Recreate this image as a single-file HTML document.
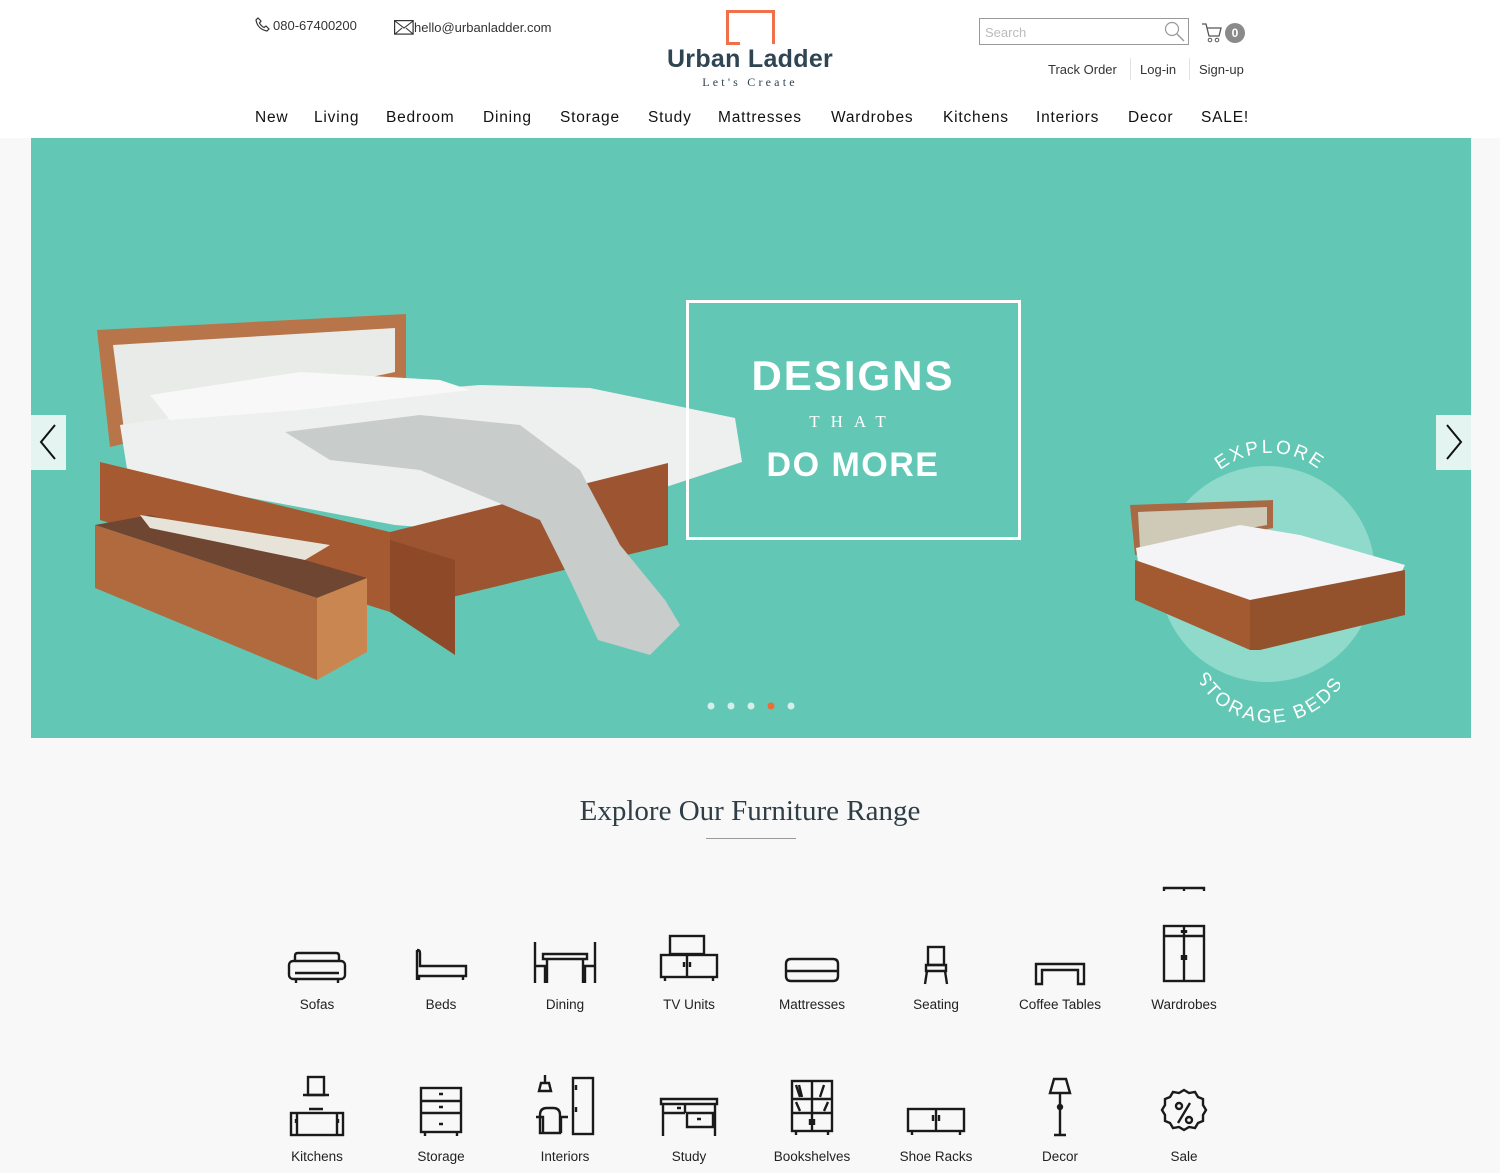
<!DOCTYPE html>
<html><head><meta charset="utf-8"><style>
*{margin:0;padding:0;box-sizing:border-box}
body{width:1500px;height:1173px;background:#f7f8f7;font-family:"Liberation Sans",sans-serif;color:#222;position:relative;overflow:hidden}
.hdr{position:absolute;left:0;top:0;width:1500px;height:138px;background:#fff}
.a{position:absolute;white-space:nowrap}
.nav span{position:absolute;top:109px;font-size:15.5px;letter-spacing:.8px;color:#111}
.banner{position:absolute;left:31px;top:138px;width:1440px;height:600px;background:#62c8b5}
.lbl{position:absolute;font-size:13.5px;color:#222;width:124px;text-align:center;margin-left:-62px}
svg.ic{position:absolute;overflow:visible}
svg.ic *{fill:none;stroke:#1a1a1a;stroke-width:2.4}
</style></head><body>
<div class="hdr"></div>
<svg class="a" style="left:255px;top:17px" width="16" height="16" viewBox="0 0 16 16"><path d="M3 1l3 3-1.5 2c1 2 2.5 3.5 4.5 4.5L11 9l3 3-2 2C6 13 2 9 1 3z" fill="none" stroke="#333" stroke-width="1.2"/></svg>
<div class="a" style="left:273px;top:18px;font-size:13px;color:#333">080-67400200</div>
<svg class="a" style="left:394px;top:20px" width="20" height="15"><rect x=".6" y=".6" width="18.5" height="13.5" fill="none" stroke="#333" stroke-width="1.2"/><path d="M1 1l9 7 9-7M1 14l7-6M19 14l-7-6" fill="none" stroke="#333" stroke-width="1.1"/></svg>
<div class="a" style="left:414px;top:20px;font-size:13px;color:#333">hello@urbanladder.com</div>
<svg class="a" style="left:726px;top:10px" width="49" height="35"><path d="M14 33.5H1.5V1.5h46V34" fill="none" stroke="#f0704a" stroke-width="3"/></svg>
<div class="a" style="left:750px;top:45px;transform:translateX(-50%);font-size:25px;font-weight:bold;color:#2f4553;letter-spacing:.3px">Urban Ladder</div>
<div class="a" style="left:750px;top:75px;transform:translateX(-50%);font-size:12px;color:#2f4553;letter-spacing:3.2px;font-family:'Liberation Serif',serif">Let's Create</div>
<div class="a" style="left:979px;top:18px;width:210px;height:27px;border:1px solid #999;background:#fff"></div>
<div class="a" style="left:985px;top:25px;font-size:13px;color:#bbb">Search</div>
<svg class="a" style="left:1164px;top:21px" width="22" height="22"><circle cx="8" cy="8" r="6.5" fill="none" stroke="#999" stroke-width="1.2"/><path d="M13 13l7 7" stroke="#999" stroke-width="1.4"/></svg>
<svg class="a" style="left:1201px;top:22px" width="22" height="22"><path d="M1 2h4l3 12h10l2-8H6" fill="none" stroke="#555" stroke-width="1.3"/><circle cx="9" cy="18" r="1.8" fill="none" stroke="#555"/><circle cx="16" cy="18" r="1.8" fill="none" stroke="#555"/></svg>
<div class="a" style="left:1225px;top:23px;width:20px;height:20px;border-radius:50%;background:#8a8a8a;color:#fff;font-size:12px;font-weight:bold;text-align:center;line-height:20px">0</div>
<div class="a" style="left:1048px;top:62px;font-size:13px;color:#333">Track Order</div>
<div class="a" style="left:1130px;top:58px;width:1px;height:22px;background:#e3e3e3"></div>
<div class="a" style="left:1140px;top:62px;font-size:13px;color:#333">Log-in</div>
<div class="a" style="left:1189px;top:58px;width:1px;height:22px;background:#e3e3e3"></div>
<div class="a" style="left:1199px;top:62px;font-size:13px;color:#333">Sign-up</div>
<div class="nav">
<span style="left:255px">New</span><span style="left:314px">Living</span><span style="left:386px">Bedroom</span><span style="left:483px">Dining</span><span style="left:560px">Storage</span><span style="left:648px">Study</span><span style="left:718px">Mattresses</span><span style="left:831px">Wardrobes</span><span style="left:943px">Kitchens</span><span style="left:1036px">Interiors</span><span style="left:1128px">Decor</span><span style="left:1201px">SALE!</span>
</div>
<div class="banner"></div>
<svg class="a" style="left:0;top:0" width="1500" height="1173">
<polygon points="97,330 406,314 406,378 110,447" fill="#b8754a"/>
<polygon points="113,345 395,328 395,372 124,430" fill="#e9ebe8"/>
<polygon points="120,425 290,400 480,385 590,388 735,418 742,462 520,535 395,525 128,475" fill="#eef0ef"/>
<polygon points="150,395 300,372 440,380 470,390 300,410 170,420" fill="#f7f8f7"/>
<polygon points="100,462 390,532 390,612 100,520" fill="#a55a32"/>
<polygon points="390,532 668,463 668,545 390,612" fill="#9c5530"/>
<polygon points="95,525 150,515 367,578 317,598" fill="#6e4632"/>
<polygon points="140,515 330,545 305,560 150,528" fill="#e8e3d8"/>
<polygon points="95,525 317,598 317,680 95,588" fill="#b06a3e"/>
<polygon points="317,598 367,578 367,652 317,680" fill="#c98650"/>
<polygon points="390,540 455,560 455,655 390,612" fill="#8e4a28"/>
<polygon points="285,432 420,415 520,425 580,470 620,545 665,600 680,625 650,655 598,640 570,580 540,520 420,470 330,460" fill="#c8ccca"/>
<rect x="687.5" y="301.5" width="332" height="237" fill="none" stroke="#fff" stroke-width="3"/>
<circle cx="1267" cy="574" r="108" fill="#8fdacb"/>
<polygon points="1130,505 1273,500 1273,528 1135,555" fill="#a86a44"/>
<polygon points="1138,512 1267,507 1267,525 1140,548" fill="#cfcab8"/>
<polygon points="1136,548 1240,525 1300,535 1405,565 1395,585 1250,600 1140,575" fill="#f4f4f6"/>
<polygon points="1135,560 1250,600 1250,650 1135,600" fill="#a35a30"/>
<polygon points="1250,600 1405,570 1405,615 1260,650 1250,650" fill="#93512c"/>
</svg>
<div class="a" style="left:853px;top:352px;transform:translateX(-50%);font-size:42px;font-weight:bold;color:#fff;letter-spacing:2px">DESIGNS</div>
<div class="a" style="left:853px;top:412px;transform:translateX(-50%);font-size:17px;color:#fff;letter-spacing:11px;font-family:'Liberation Serif',serif">THAT</div>
<div class="a" style="left:853px;top:446px;transform:translateX(-50%);font-size:34px;font-weight:bold;color:#fff;letter-spacing:1.5px">DO MORE</div>
<svg class="a" style="left:1200px;top:425px" width="140" height="300">
<defs><path id="t" d="M10 55 A80 80 0 0 1 130 55"/><path id="b" d="M-5 250 A85 85 0 0 0 145 255"/></defs>
<text font-family="Liberation Sans" font-size="19" fill="#fff" letter-spacing="2.5"><textPath href="#t" startOffset="50%" text-anchor="middle">EXPLORE</textPath></text>
<text font-family="Liberation Sans" font-size="19" fill="#fff" letter-spacing="2.5"><textPath href="#b" startOffset="50%" text-anchor="middle">STORAGE BEDS</textPath></text>
</svg>
<div class="a" style="left:31px;top:415px;width:35px;height:55px;background:#e4f5f1"></div>
<div class="a" style="left:1436px;top:415px;width:35px;height:55px;background:#e4f5f1"></div>
<svg class="a" style="left:31px;top:415px" width="35" height="55"><path d="M24 10L10 27l14 17" fill="none" stroke="#111" stroke-width="2"/></svg>
<svg class="a" style="left:1436px;top:415px" width="35" height="55"><path d="M11 10l14 17-14 17" fill="none" stroke="#111" stroke-width="2"/></svg>
<svg class="a" style="left:700px;top:698px" width="100" height="16"><circle cx="11" cy="8" r="3.5" fill="#d6eee9"/><circle cx="31" cy="8" r="3.5" fill="#d6eee9"/><circle cx="51" cy="8" r="3.5" fill="#d6eee9"/><circle cx="71" cy="8" r="3.5" fill="#f06a38"/><circle cx="91" cy="8" r="3.5" fill="#d6eee9"/></svg>
<div class="a" style="left:750px;top:795px;transform:translateX(-50%);font-size:29px;color:#2f3e46;font-family:'Liberation Serif',serif">Explore Our Furniture Range</div>
<div class="a" style="left:706px;top:838px;width:90px;height:1px;background:#999"></div>
<svg class="ic" style="left:287px;top:951px" width="60" height="34"><rect x="2" y="10" width="56" height="18" rx="4"/><path d="M8 10V5q0-3 3-3h38q3 0 3 3v5M8 22h44M9 28v4M51 28v4"/></svg>
<svg class="ic" style="left:413px;top:948px" width="56" height="36"><path d="M4 2v30M4 2q3 0 3 3v13h46v10H4M7 18h46M6 28v4M50 28v4"/></svg>
<svg class="ic" style="left:533px;top:942px" width="64" height="42"><path d="M2 0v41M62 0v41M10 12h44v5H10zM14 17v24M50 17v24M2 24h10v17M62 24H52v17"/></svg>
<svg class="ic" style="left:659px;top:934px" width="60" height="50"><rect x="11" y="2" width="34" height="18"/><rect x="2" y="21" width="56" height="22"/><path d="M28 21v22M25 28v5M31 28v5M6 43v4M54 43v4"/></svg>
<svg class="ic" style="left:783px;top:956px" width="58" height="28"><path d="M3 8q0-5 5-5h42q5 0 5 5v12q0 5-5 5H8q-5 0-5-5z M4 15h50"/></svg>
<svg class="ic" style="left:922px;top:945px" width="28" height="40"><rect x="6" y="2" width="16" height="18"/><path d="M4 20h20v6H4zM5 26l-2 13M23 26l2 13"/></svg>
<svg class="ic" style="left:1034px;top:961px" width="52" height="24"><path d="M2 23V3h48v20h-6V9H8v14z"/></svg>
<svg class="ic" style="left:1162px;top:885px" width="44" height="100"><path d="M2 6V3h40v3M22 3v3"/><rect x="2" y="41" width="40" height="55"/><path d="M2 51h40M22 41v55M20 45v3M24 45v3M20 70v5M24 70v5"/></svg>
<div class="lbl" style="left:317px;top:997px">Sofas</div>
<div class="lbl" style="left:441px;top:997px">Beds</div>
<div class="lbl" style="left:565px;top:997px">Dining</div>
<div class="lbl" style="left:689px;top:997px">TV Units</div>
<div class="lbl" style="left:812px;top:997px">Mattresses</div>
<div class="lbl" style="left:936px;top:997px">Seating</div>
<div class="lbl" style="left:1060px;top:997px">Coffee Tables</div>
<div class="lbl" style="left:1184px;top:997px">Wardrobes</div>
<svg class="ic" style="left:289px;top:1075px" width="56" height="62"><rect x="19" y="2" width="16" height="18"/><path d="M14 20h26M20 34h14"/><rect x="2" y="38" width="52" height="22"/><path d="M8 38v22M48 38v22M7 44v4M49 44v4"/></svg>
<svg class="ic" style="left:419px;top:1086px" width="44" height="52"><rect x="2" y="2" width="40" height="44"/><path d="M2 15h40M2 27h40M20 8h4M20 21h4M20 38h4M6 46v4M38 46v4"/></svg>
<svg class="ic" style="left:534px;top:1075px" width="64" height="62"><path d="M11 0v8M7 8h8l2 8H5z"/><rect x="39" y="3" width="20" height="56"/><path d="M42 10v5M42 32v5"/><path d="M6 58v-18q0-7 7-7h6q7 0 7 7v18zM2 42h7v16M34 42h-7v16"/></svg>
<svg class="ic" style="left:659px;top:1097px" width="60" height="40"><path d="M2 2h56v5H2zM4 7v32M56 7v32M4 16h22M26 7v9M28 16h26v14H28zM38 22h4M18 11h4"/></svg>
<svg class="ic" style="left:790px;top:1079px" width="44" height="58"><rect x="2" y="2" width="40" height="50"/><path d="M2 20h40M2 34h40M22 2v50M6 52v4M38 52v4M20 40v6M24 40v6M6 6l4 12M9 6l3 12M34 6l-4 12M6 23l4 9M38 23l-4 9"/></svg>
<svg class="ic" style="left:906px;top:1107px" width="60" height="30"><rect x="2" y="2" width="56" height="22"/><path d="M30 2v22M27 8v6M33 8v6M6 24v4M54 24v4"/></svg>
<svg class="ic" style="left:1046px;top:1077px" width="28" height="60"><path d="M8 2h12l4 14H4zM14 16v42M8 58h12"/><circle cx="14" cy="30" r="2"/></svg>
<svg class="ic" style="left:1160px;top:1088px" width="48" height="50"><path d="M24 2l5 3 6-1 3 5 5 2v6l3 5-3 5v6l-5 2-3 5-6-1-5 3-5-3-6 1-3-5-5-2v-6l-3-5 3-5v-6l5-2 3-5 6 1z"/><path d="M30 15L18 35"/><circle cx="19" cy="18" r="3"/><circle cx="29" cy="32" r="3"/></svg>
<div class="lbl" style="left:317px;top:1149px">Kitchens</div>
<div class="lbl" style="left:441px;top:1149px">Storage</div>
<div class="lbl" style="left:565px;top:1149px">Interiors</div>
<div class="lbl" style="left:689px;top:1149px">Study</div>
<div class="lbl" style="left:812px;top:1149px">Bookshelves</div>
<div class="lbl" style="left:936px;top:1149px">Shoe Racks</div>
<div class="lbl" style="left:1060px;top:1149px">Decor</div>
<div class="lbl" style="left:1184px;top:1149px">Sale</div>
</body></html>
